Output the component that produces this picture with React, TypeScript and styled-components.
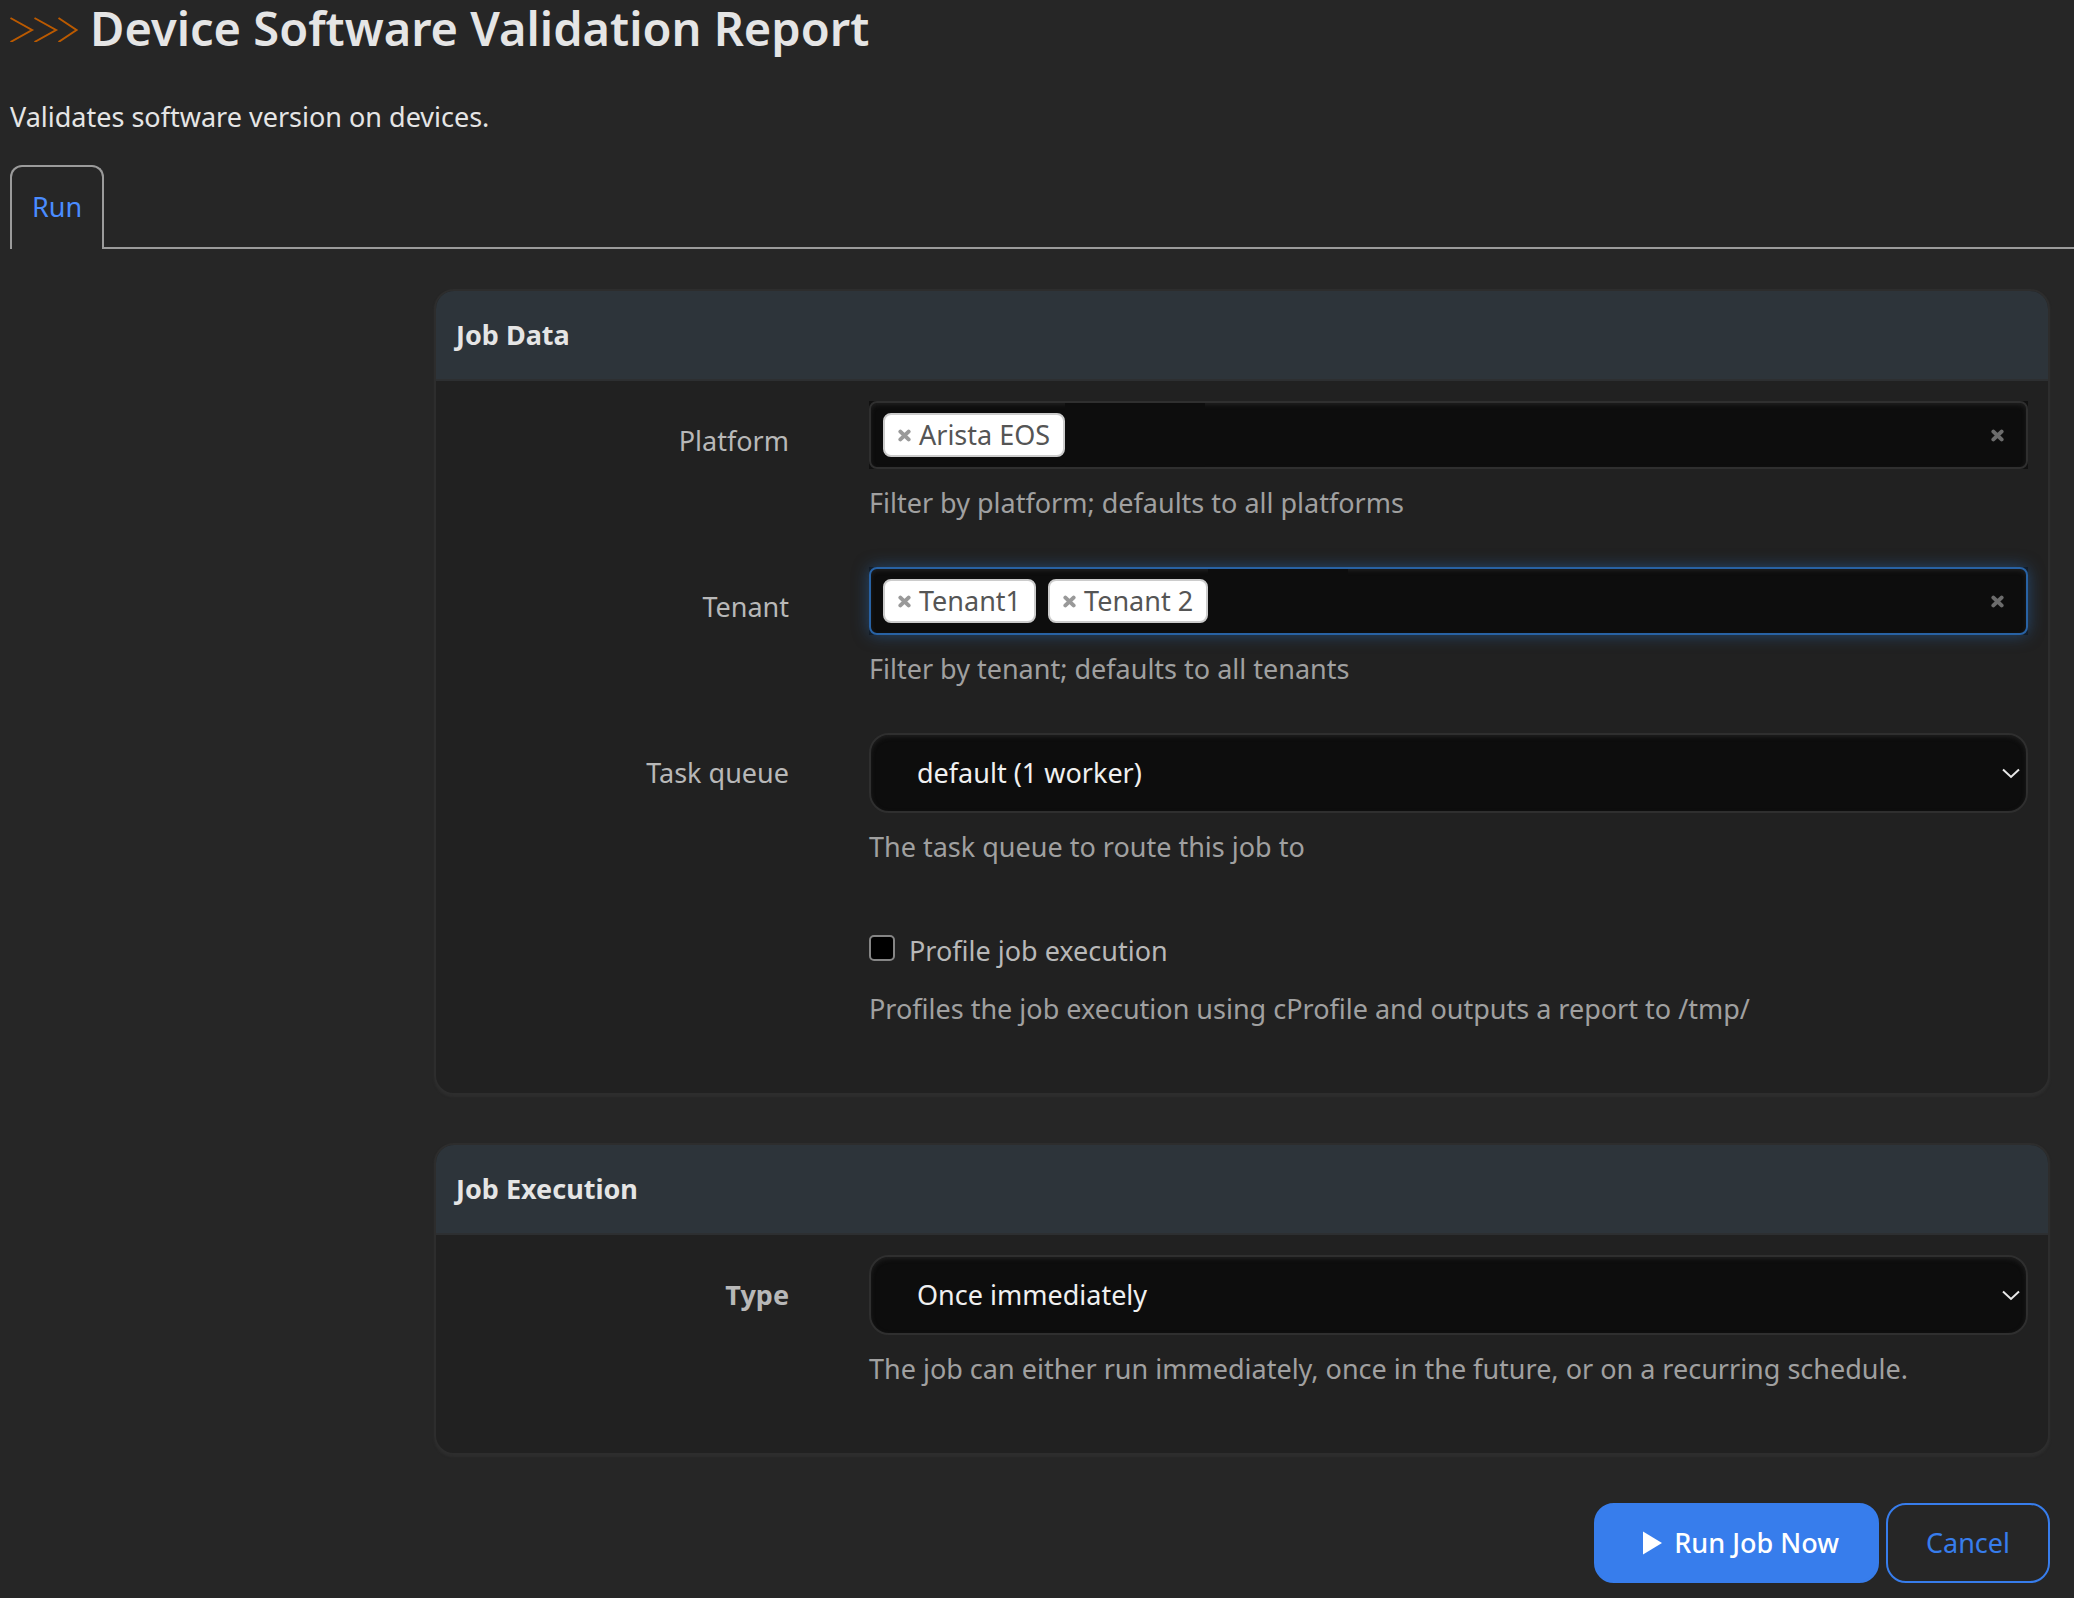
import React, { useState } from 'react';
import styled, { createGlobalStyle, css } from 'styled-components';

const GlobalStyle = createGlobalStyle`
  *, *::before, *::after { box-sizing: border-box; }
  body {
    margin: 0;
    background: #262626;
    color: #e5e5e5;
    font-family: "Noto Sans", "Open Sans", sans-serif;
    font-size: 27px;
    line-height: 40px;
  }
  button, input, select { font: inherit; }
`;

const Page = styled.div`
  padding-bottom: 15px;
`;

const PageHeader = styled.header`
  padding: 0 10px;
`;

const Title = styled.h1`
  display: flex;
  align-items: center;
  gap: 10px;
  margin: 0;
  padding: 0 0 2px;
  font-size: 47px;
  font-weight: 600;
  line-height: 56px;
`;

const Chevrons = styled.svg`
  flex: none;
  width: 70px;
  height: 28px;
  fill: none;
  stroke: #bb5a00;
  stroke-width: 2;
`;

const Description = styled.p`
  margin: 39px 0 0;
`;

const Tabs = styled.nav`
  display: flex;
  margin-top: 28px;
  padding-left: 10px;

  &::after {
    content: "";
    flex: 1;
    border-bottom: 2px solid #9b9b9b;
  }
`;

const Tab = styled.a`
  padding: 20px 20px 22px;
  border: 2px solid #9b9b9b;
  border-bottom: 0;
  border-radius: 12px 12px 0 0;
  color: #4a8cff;
  text-decoration: none;
`;

const Form = styled.form`
  margin: 40px 24px 0 434px;

  @media (max-width: 1200px) {
    margin-left: 24px;
  }
`;

const Panel = styled.section`
  margin-bottom: 48px;
  border: 2px solid #2d2d2d;
  border-radius: 20px;
  background: #212121;
  box-shadow: 0 2px 2px #2d2d2d;
  overflow: hidden;
`;

const PanelHeading = styled.h2`
  margin: 0;
  padding: 24px 20px;
  border-bottom: 2px solid #2d2f31;
  background: #2d343a;
  font-size: inherit;
  font-weight: 700;
`;

const PanelBody = styled.div`
  padding: 20px 20px 64px;
  display: grid;
  gap: 44px;
`;

const Row = styled.div`
  display: grid;
  grid-template-columns: minmax(0, 1fr) minmax(0, 3fr);
`;

const RowLabel = styled.label<{ $required?: boolean }>`
  padding: 20px 60px 0 0;
  color: #b8b8b8;
  text-align: right;
  font-weight: ${(p) => (p.$required ? 700 : 400)};
`;

const Control = styled.div`
  grid-column: 2;
  padding-left: 20px;
`;

const Help = styled.p`
  margin: 14px 0 0;
  color: #a0a0a0;
`;

const field = css`
  border: 2px solid #2f2f2f;
  background: #0d0d0d;
  box-shadow: inset 0 2px 4px #1f1f1f;
`;

const TagFrame = styled.div`
  background: #111;
`;

const TagBox = styled.div<{ $active?: boolean }>`
  ${field}
  display: flex;
  align-items: center;
  min-height: 68px;
  padding: 0 22px 0 12px;
  border-radius: 8px;
  ${(p) =>
    p.$active &&
    css`
      border-color: #2862a4;
      box-shadow: inset 0 2px 4px #1f1f1f, 0 0 16px rgba(40, 98, 164, 0.6);
    `}
`;

const TagList = styled.ul`
  display: flex;
  gap: 12px;
  margin: 0;
  padding: 0;
  list-style: none;
`;

const Tag = styled.li`
  display: flex;
  align-items: center;
  gap: 8px;
  height: 44px;
  padding: 0 13px;
  border: 2px solid #ccc;
  border-radius: 8px;
  background: #fff;
  color: #555;
`;

const CrossButton = styled.button`
  display: flex;
  padding: 0;
  border: 0;
  background: none;
  color: #999;
  cursor: pointer;
`;

const ClearButton = styled(CrossButton)`
  margin-left: auto;
  color: #6c6c6c;
`;

const TagSearch = styled.input`
  width: 140px;
  height: 64px;
  padding: 0 10px;
  border: 0;
  outline: 0;
  background: #0d0d0d;
  color: #e5e5e5;
`;

const SelectWrap = styled.div`
  position: relative;
`;

const Select = styled.select`
  ${field}
  display: block;
  width: 100%;
  height: 80px;
  padding: 0 46px;
  border-radius: 20px;
  color: #f0f0f0;
  appearance: none;
`;

const Arrow = styled.svg`
  position: absolute;
  top: 50%;
  right: 8px;
  width: 18px;
  height: 12px;
  margin-top: -5px;
  fill: none;
  stroke: #e8e8e8;
  stroke-width: 2;
  pointer-events: none;
`;

const CheckLabel = styled.label`
  display: flex;
  align-items: center;
  gap: 14px;
  padding-top: 20px;
  color: #b8b8b8;
`;

const Checkbox = styled.input`
  width: 26px;
  height: 26px;
  margin: 0 0 6px;
  border: 2px solid #858585;
  border-radius: 5px;
  background: #000;
  appearance: none;

  &:checked {
    background: #377dec;
  }
`;

const CheckHelp = styled(Help)`
  margin-top: 18px;
`;

const Actions = styled.div`
  display: flex;
  justify-content: flex-end;
  gap: 7px;
`;

const Button = styled.button<{ $primary?: boolean }>`
  display: flex;
  align-items: center;
  gap: 12px;
  height: 80px;
  padding: 0 38px;
  border: 2px solid #377dec;
  border-radius: 20px;
  background: ${(p) => (p.$primary ? '#377dec' : 'transparent')};
  color: ${(p) => (p.$primary ? '#fff' : '#377dec')};
  font-weight: ${(p) => (p.$primary ? 500 : 400)};
`;

const PlayIcon = styled.svg`
  flex: none;
  width: 28px;
  height: 24px;
  padding-left: 9px;
  fill: currentColor;
`;

const Cross = () => (
  <svg width="13" height="13" viewBox="0 0 13 13" aria-hidden="true">
    <path d="M2.4 2.6 10.6 10.4M10.6 2.6 2.4 10.4" stroke="currentColor" strokeWidth="4" strokeLinecap="round" />
  </svg>
);

type TagFieldProps = { id: string; label: string; help: string; initial: string[]; active?: boolean };

function TagField({ id, label, help, initial, active }: TagFieldProps) {
  const [tags, setTags] = useState(initial);
  return (
    <Row>
      <RowLabel htmlFor={id}>{label}</RowLabel>
      <Control>
        <TagFrame>
          <TagBox $active={active}>
            <TagList>
              {tags.map((tag) => (
                <Tag key={tag}>
                  <CrossButton
                    type="button"
                    aria-label={`Remove ${tag}`}
                    onClick={() => setTags(tags.filter((t) => t !== tag))}
                  >
                    <Cross />
                  </CrossButton>
                  {tag}
                </Tag>
              ))}
            </TagList>
            <TagSearch id={id} type="text" autoComplete="off" />
            <ClearButton type="button" aria-label={`Clear ${label}`} onClick={() => setTags([])}>
              <Cross />
            </ClearButton>
          </TagBox>
        </TagFrame>
        <Help>{help}</Help>
      </Control>
    </Row>
  );
}

type SelectFieldProps = { id: string; label: string; help: string; options: string[]; required?: boolean };

function SelectField({ id, label, help, options, required }: SelectFieldProps) {
  return (
    <Row>
      <RowLabel htmlFor={id} $required={required}>
        {label}
      </RowLabel>
      <Control>
        <SelectWrap>
          <Select id={id} required={required}>
            {options.map((o) => (
              <option key={o}>{o}</option>
            ))}
          </Select>
          <Arrow viewBox="0 0 18 12" aria-hidden="true">
            <path d="M1 1.5 9 9 17 1.5" />
          </Arrow>
        </SelectWrap>
        <Help>{help}</Help>
      </Control>
    </Row>
  );
}

export default function App() {
  return (
    <Page>
      <GlobalStyle />
      <PageHeader>
        <Title>
          <Chevrons viewBox="0 0 70 28" aria-hidden="true">
            <path d="M0.5 4 22 16 0.5 28M24.5 4 46 16 24.5 28M48.5 4 66.5 16 48.5 28" />
          </Chevrons>
          Device Software Validation Report
        </Title>
        <Description>Validates software version on devices.</Description>
      </PageHeader>
      <Tabs>
        <Tab href="#run">Run</Tab>
      </Tabs>
      <Form id="run" onSubmit={(e) => e.preventDefault()}>
        <Panel>
          <PanelHeading>Job Data</PanelHeading>
          <PanelBody>
            <TagField
              id="platform"
              label="Platform"
              help="Filter by platform; defaults to all platforms"
              initial={['Arista EOS']}
            />
            <TagField
              id="tenant"
              label="Tenant"
              help="Filter by tenant; defaults to all tenants"
              initial={['Tenant1', 'Tenant 2']}
              active
            />
            <SelectField
              id="queue"
              label="Task queue"
              help="The task queue to route this job to"
              options={['default (1 worker)']}
            />
            <Row>
              <Control>
                <CheckLabel>
                  <Checkbox type="checkbox" />
                  Profile job execution
                </CheckLabel>
                <CheckHelp>Profiles the job execution using cProfile and outputs a report to /tmp/</CheckHelp>
              </Control>
            </Row>
          </PanelBody>
        </Panel>
        <Panel>
          <PanelHeading>Job Execution</PanelHeading>
          <PanelBody>
            <SelectField
              id="type"
              label="Type"
              help="The job can either run immediately, once in the future, or on a recurring schedule."
              options={['Once immediately']}
              required
            />
          </PanelBody>
        </Panel>
        <Actions>
          <Button type="submit" $primary>
            <PlayIcon viewBox="0 0 19 24" aria-hidden="true">
              <path d="M0 0.5 19 12 0 23.5Z" />
            </PlayIcon>
            Run Job Now
          </Button>
          <Button type="button">Cancel</Button>
        </Actions>
      </Form>
    </Page>
  );
}
